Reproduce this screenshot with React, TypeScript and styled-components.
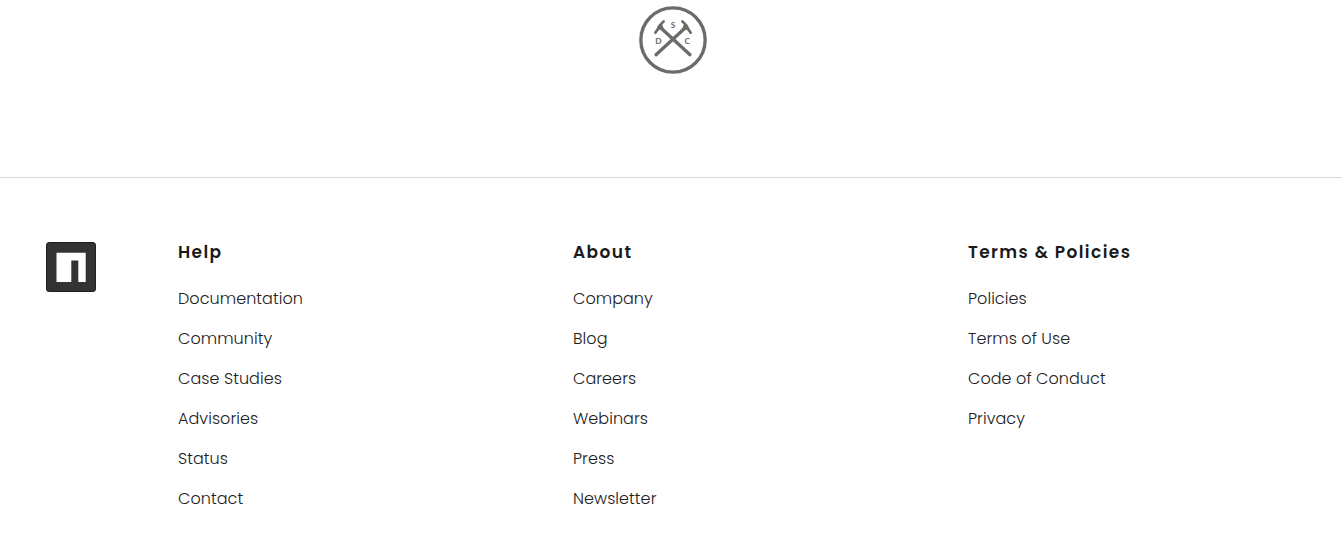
import React from "react";
import styled, { createGlobalStyle } from "styled-components";

const GlobalStyle = createGlobalStyle`
  * { box-sizing: border-box; }
  body {
    margin: 0;
    background: #fff;
    font-family: Poppins, Inter, "Liberation Sans", sans-serif;
  }
`;

const Page = styled.div`
  height: 552px;
  overflow: hidden;
`;

const Badge = styled.div`
  display: flex;
  justify-content: center;
  height: 177px;
  padding-left: 4px;
`;

const Footer = styled.footer`
  display: grid;
  grid-template-columns: 132px 395px 395px 1fr;
  padding: 64px 0 0 46px;
  border-top: 1px solid #d9d9d9;
`;

const Column = styled.section`
  display: flex;
  flex-direction: column;
`;

const Heading = styled.h3`
  margin: 0 0 27px;
  font-size: 17px;
  line-height: 20px;
  font-weight: 600;
  letter-spacing: 1.4px;
  color: #1a1a1a;
  white-space: nowrap;
`;

const List = styled.ul`
  display: flex;
  flex-direction: column;
  gap: 20px;
  margin: 0;
  padding: 0;
  list-style: none;
`;

const Item = styled.li`
  height: 20px;
  line-height: 20px;
`;

const Link = styled.a`
  font-size: 16px;
  font-weight: 300;
  letter-spacing: 0.06px;
  color: #202020;
  white-space: nowrap;
`;

const columns = [
  {
    title: "Help",
    links: ["Documentation", "Community", "Case Studies", "Advisories", "Status", "Contact"],
  },
  {
    title: "About",
    links: ["Company", "Blog", "Careers", "Webinars", "Press", "Newsletter"],
  },
  {
    title: "Terms & Policies",
    links: ["Policies", "Terms of Use", "Code of Conduct", "Privacy"],
  },
];

const BadgeText = styled.text`
  font-family: Lato, sans-serif;
  font-size: 25px;
  font-weight: 700;
  text-anchor: middle;
  fill: #686868;
`;

const Hammer = () => (
  <g stroke="#6b6b6b" strokeLinecap="round" strokeLinejoin="round">
    <path d="M72 164L160 83" strokeWidth="10" />
    <path d="M151 64L163 76L168 86L176 98" strokeWidth="8" />
    <path d="M158 74L154 84L168 88Z" strokeWidth="5" fill="#6b6b6b" />
  </g>
);

const CraftBadge = () => (
  <svg width="82" height="80" viewBox="0 0 246 240" fill="none">
    <circle cx="123" cy="120" r="96.5" stroke="#6b6b6b" strokeWidth="10" />
    <Hammer />
    <g transform="translate(246 0) scale(-1 1)">
      <Hammer />
    </g>
    <BadgeText x="123" y="83">S</BadgeText>
    <BadgeText x="79" y="132">D</BadgeText>
    <BadgeText x="166" y="132">C</BadgeText>
  </svg>
);

const NpmLogo = () => (
  <svg width="50" height="50" viewBox="0 0 50 50">
    <rect width="50" height="50" rx="3.5" fill="#202020" />
    <rect x="1" y="1" width="48" height="48" rx="2.5" fill="#333" />
    <path d="M10.5 10.7H39.7V40H32.3V18.5H25.3V40H10.5Z" fill="#fff" />
  </svg>
);

export default function App() {
  return (
    <Page>
      <GlobalStyle />
      <Badge>
        <CraftBadge />
      </Badge>
      <Footer>
        <NpmLogo />
        {columns.map(({ title, links }) => (
          <Column key={title}>
            <Heading>{title}</Heading>
            <List>
              {links.map((label) => (
                <Item key={label}>
                  <Link>{label}</Link>
                </Item>
              ))}
            </List>
          </Column>
        ))}
      </Footer>
    </Page>
  );
}
